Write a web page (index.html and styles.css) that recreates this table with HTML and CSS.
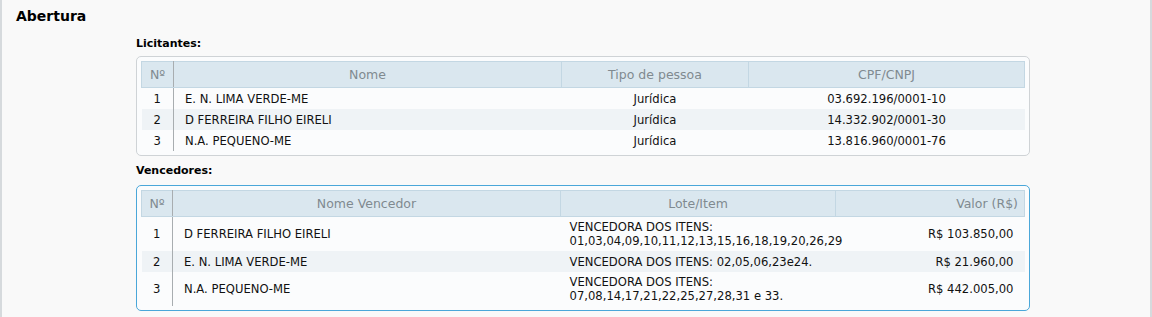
FILE: index.html
```html
<!DOCTYPE html>
<html lang="pt">
<head>
<meta charset="utf-8">
<link rel="stylesheet" href="styles.css">
</head>
<body>
<div class="page">
  <h2 class="title">Abertura</h2>
  <div class="section">
    <div class="label">Licitantes:</div>
    <div class="box">
      <table class="grid">
        <colgroup><col class="c-no"><col class="c-nome"><col class="c-tipo"><col></colgroup>
        <thead>
          <tr><th class="no">Nº</th><th>Nome</th><th>Tipo de pessoa</th><th>CPF/CNPJ</th></tr>
        </thead>
        <tbody>
          <tr><td class="no">1</td><td class="name">E. N. LIMA VERDE-ME</td><td class="center">Jurídica</td><td class="center">03.692.196/0001-10</td></tr>
          <tr class="alt"><td class="no">2</td><td class="name">D FERREIRA FILHO EIRELI</td><td class="center">Jurídica</td><td class="center">14.332.902/0001-30</td></tr>
          <tr><td class="no">3</td><td class="name">N.A. PEQUENO-ME</td><td class="center">Jurídica</td><td class="center">13.816.960/0001-76</td></tr>
        </tbody>
      </table>
    </div>
    <div class="label label2">Vencedores:</div>
    <div class="box box-blue">
      <table class="grid">
        <colgroup><col class="c-no2"><col class="c-nome"><col class="c-lote"><col></colgroup>
        <thead>
          <tr><th class="no">Nº</th><th>Nome Vencedor</th><th>Lote/Item</th><th class="right">Valor (R$)</th></tr>
        </thead>
        <tbody>
          <tr class="tall"><td class="no">1</td><td class="name">D FERREIRA FILHO EIRELI</td><td class="lote">VENCEDORA DOS ITENS:<br>01,03,04,09,10,11,12,13,15,16,18,19,20,26,29</td><td class="val">R$ 103.850,00</td></tr>
          <tr class="alt"><td class="no">2</td><td class="name">E. N. LIMA VERDE-ME</td><td class="lote">VENCEDORA DOS ITENS: 02,05,06,23e24.</td><td class="val">R$ 21.960,00</td></tr>
          <tr class="tall"><td class="no">3</td><td class="name">N.A. PEQUENO-ME</td><td class="lote">VENCEDORA DOS ITENS:<br>07,08,14,17,21,22,25,27,28,31 e 33.</td><td class="val">R$ 442.005,00</td></tr>
        </tbody>
      </table>
    </div>
  </div>
</div>
</body>
</html>
```

FILE: styles.css
```css
html, body {
  margin: 0;
  padding: 0;
}
body {
  font-family: "DejaVu Sans", Verdana, sans-serif;
  font-size: 11px;
  color: #111;
  background: #f9f9f9;
}
.page {
  height: 317px;
  box-sizing: border-box;
  border-left: 2px solid #d6dadd;
  border-right: 2px solid #d6dadd;
  background: #f9f9f9;
  padding-top: 6px;
}
.title {
  margin: 0 0 0 14px;
  font-size: 14px;
  line-height: 20px;
  font-weight: bold;
  color: #000;
}
.section {
  padding-left: 134px;
  width: 894px;
}
.label {
  margin-top: 11px;
  font-weight: bold;
  font-size: 11px;
  line-height: 14px;
  height: 14px;
  margin-bottom: 5px;
  color: #000;
}
.label2 {
  margin-top: 8px;
  margin-bottom: 7px;
}
.box {
  box-sizing: border-box;
  width: 894px;
  border: 1px solid #cfd3d6;
  border-radius: 5px;
  background: #fbfcfd;
  padding: 4px;
}
.box-blue {
  border-color: #4aa7d9;
}
.grid {
  width: 100%;
  border-collapse: collapse;
  table-layout: fixed;
}
.c-no { width: 32px; }
.c-no2 { width: 31px; }
.c-nome { width: 388px; }
.c-tipo { width: 187px; }
.c-lote { width: 275px; }
.grid th {
  height: 26px;
  box-sizing: border-box;
  padding: 0 6px;
  background: #dae7ef;
  border: 1px solid #c3d7e3;
  color: #808a90;
  font-weight: normal;
  font-size: 12.5px;
  text-align: center;
}
.grid th.no {
  border-right: 1px solid #a8adb0;
}
.grid th.right {
  text-align: right;
  padding-right: 6px;
}
.grid td {
  height: 21px;
  padding: 0;
  font-size: 11.6px;
  line-height: 14px;
}
.grid tr.tall td {
  height: 34px;
}
.grid tr.alt td {
  background: #eff3f6;
}
.grid td.no {
  text-align: center;
  border-right: 1px solid #a8adb0;
}
.grid td.name {
  padding-left: 11px;
}
.grid td.center {
  text-align: center;
}
.grid td.lote {
  padding-left: 9px;
}
.grid td.val {
  text-align: right;
  padding-right: 11px;
}
```
